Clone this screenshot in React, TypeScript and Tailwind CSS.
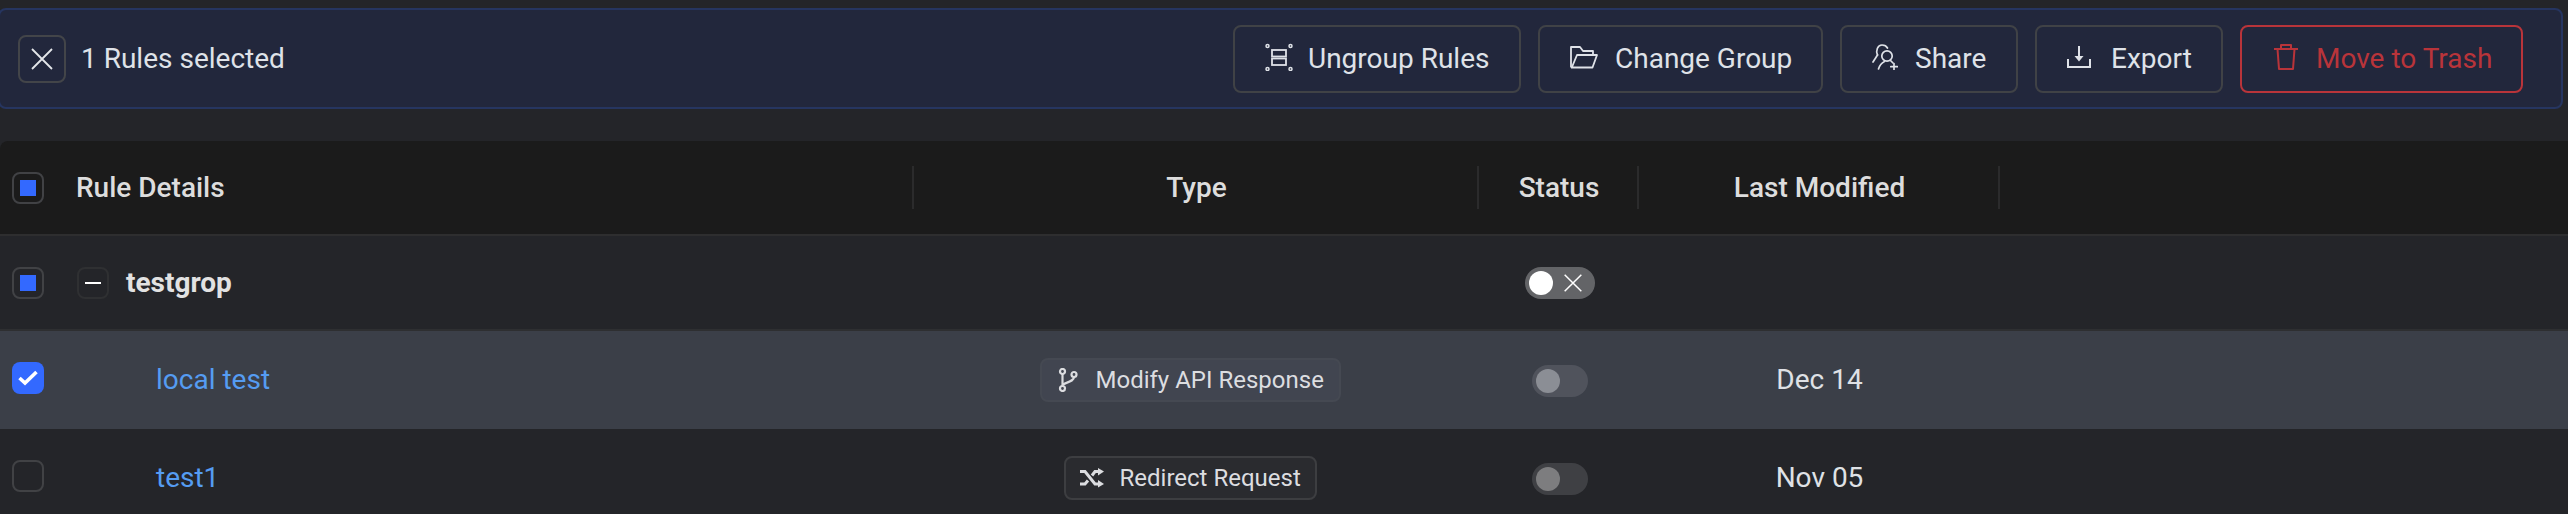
import React, { ReactNode } from "react";

const font = { fontFamily: "Roboto, sans-serif" };

const XIcon = ({ className }: { className?: string }) => (
  <svg viewBox="0 0 24 24" className={className} fill="none" stroke="currentColor" strokeWidth="1.8">
    <path d="M2 2L22 22M22 2L2 22" />
  </svg>
);

const UngroupIcon = () => (
  <svg viewBox="0 0 28 28" className="w-7 h-7" fill="none" stroke="currentColor" strokeWidth="1.5">
    <circle cx="2.500" cy="3" r="1.500" />
    <circle cx="25.500" cy="3" r="1.500" />
    <circle cx="2.500" cy="26" r="1.500" />
    <circle cx="25.500" cy="26" r="1.500" />
    <rect x="7" y="7" width="14" height="6.500" strokeWidth="1.800" />
    <rect x="7" y="15.500" width="14" height="6.500" strokeWidth="1.800" />
  </svg>
);

const FolderIcon = () => (
  <svg viewBox="0 0 28 28" className="w-7 h-7" fill="none" stroke="currentColor" strokeWidth="1.8" strokeLinejoin="round">
    <path d="M1 24.500V4H10L13 8H23V12" />
    <path d="M1 24.500H22.500L27 12H7L2 24" />
  </svg>
);

const ShareIcon = () => (
  <svg viewBox="0 0 26 26" className="w-[26px] h-[26px]" fill="none" stroke="currentColor" strokeWidth="1.700" strokeLinecap="round">
    <path d="M5.500 11C3.500 7 5.500 1 10 1C12.500 1 14.500 2 15.500 4" />
    <path d="M5.500 11L1 18" />
    <circle cx="15" cy="12" r="5.200" />
    <path d="M6.500 25C7.500 21.500 9.500 19 12.500 17.500" />
    <path d="M18.500 16.500L21 19" />
    <path d="M22 19.500V26M18.800 22.700H25.500" />
  </svg>
);

const ExportIcon = () => (
  <svg viewBox="0 0 24 24" className="w-6 h-6" fill="none" stroke="currentColor" strokeWidth="2">
    <path d="M12 1V13" />
    <path d="M7.500 11H16.500L12 16.500Z" fill="currentColor" stroke="none" />
    <path d="M1 14V22H23V14" />
  </svg>
);

const TrashIcon = () => (
  <svg viewBox="0 0 24 26" className="w-6 h-[26px]" fill="none" stroke="currentColor" strokeWidth="2" strokeLinejoin="round">
    <path d="M0 5H24" />
    <path d="M7 5V1H17V5" />
    <path d="M3.500 5L5 25H19L20.500 5" />
  </svg>
);

const BranchIcon = () => (
  <svg viewBox="0 0 20 24" className="w-5 h-6" fill="none" stroke="currentColor" strokeWidth="2.200">
    <circle cx="4.500" cy="3.500" r="2.500" />
    <circle cx="4.500" cy="20.500" r="2.500" />
    <circle cx="16" cy="6.500" r="2.500" />
    <path d="M4.500 6V18" />
    <path d="M16 9C16 13 10 14 4.500 16.500" />
  </svg>
);

const ShuffleIcon = () => (
  <svg viewBox="0 0 24 20" className="w-6 h-5" fill="none" stroke="currentColor" strokeWidth="3">
    <path d="M0 3.500H5L15 16H19" />
    <path d="M0 16H5L8 12.500M12 7.500L15 3.500H19" />
    <path d="M18 0L24 3.500L18 7.500Z" fill="currentColor" stroke="none" />
    <path d="M18 12L24 16L18 19.500Z" fill="currentColor" stroke="none" />
  </svg>
);

const ActionButton = ({ icon, label, danger, className }: { icon: ReactNode; label: string; danger?: boolean; className?: string }) => (
  <button
    className={
      "h-[68px] flex items-center rounded-lg border-2 text-[28px] " +
      (danger ? "border-[#b9343a] text-[#b9343a] " : "border-[#404246] text-[#dfe2e8] ") +
      className
    }
  >
    <span className="-mt-1">{icon}</span>
    <span>{label}</span>
  </button>
);

const Checkbox = ({ state }: { state: "some" | "on" | "off" }) => {
  if (state === "on") {
    return (
      <div className="w-8 h-8 rounded-lg bg-[#3369ff] flex items-center justify-center">
        <svg viewBox="0 0 20 16" className="w-5 h-4" fill="none" stroke="white" strokeWidth="3.600">
          <path d="M1.500 8L7 13L18.500 2" />
        </svg>
      </div>
    );
  }
  return (
    <div className="w-8 h-8 rounded-lg border-2 border-[#414245] flex items-center justify-center">
      {state === "some" && <div className="w-4 h-4 bg-[#3369ff]" />}
    </div>
  );
};

const Toggle = ({ muted }: { muted: boolean }) => (
  <div className={"w-14 h-8 mt-[2px] rounded-full flex items-center pl-1 " + (muted ? "bg-[#50535c]" : "bg-[#3f4044]")}>
    <div className={"w-6 h-6 rounded-full " + (muted ? "bg-[#8b8e95]" : "bg-[#7d7d7f]")} />
  </div>
);

const Tag = ({ icon, label, className }: { icon: ReactNode; label: string; className: string }) => (
  <div className={"h-11 flex items-center rounded-lg border-2 text-[24px] text-[#dcdde0] " + className}>
    {icon}
    <span>{label}</span>
  </div>
);

const HeaderCell = ({ label, className }: { label: string; className: string }) => (
  <div className={"h-[43px] flex items-center border-r-2 border-[#2b2b2c] " + className}>{label}</div>
);

export default function App() {
  return (
    <div className="w-[2568px] h-[514px] overflow-hidden bg-[#242529] pt-2" style={font}>
      {/* 選択バナー */}
      <div className="h-[101px] w-[2565px] -ml-[2px] rounded-lg border-2 border-[#263560] bg-[#22273c] flex items-center pl-[18px] pr-[38px]">
        <button className="w-12 h-12 rounded-lg border-2 border-[#434549] flex items-center justify-center text-[#e4e6ea]">
          <XIcon className="w-6 h-6" />
        </button>
        <span className="ml-[15px] text-[28px] text-[#dfe2e8]">1 Rules selected</span>
        <div className="ml-auto flex gap-[17px]">
          <ActionButton icon={<UngroupIcon />} label="Ungroup Rules" className="w-[288px] pl-[30px] gap-[15px]" />
          <ActionButton icon={<FolderIcon />} label="Change Group" className="w-[285px] pl-[30px] gap-[17px]" />
          <ActionButton icon={<ShareIcon />} label="Share" className="w-[178px] pl-[30px] gap-[17px]" />
          <ActionButton icon={<ExportIcon />} label="Export" className="w-[188px] pl-[30px] gap-5" />
          <ActionButton icon={<TrashIcon />} label="Move to Trash" danger className="w-[283px] pl-8 gap-[18px]" />
        </div>
      </div>

      {/* ヘッダー */}
      <div className="mt-8 h-[95px] bg-[#1b1b1b] border-b-2 border-[#2e2e2f] flex items-center text-[28px] font-medium text-[#dddddd] rounded-tl-lg">
        <div className="w-[76px] pl-3 shrink-0">
          <Checkbox state="some" />
        </div>
        <HeaderCell label="Rule Details" className="w-[838px] justify-start" />
        <HeaderCell label="Type" className="w-[565px] justify-center pl-[2px]" />
        <HeaderCell label="Status" className="w-[160px] justify-center pl-[2px]" />
        <HeaderCell label="Last Modified" className="w-[361px] justify-center pl-[2px]" />
      </div>

      {/* グループ行 */}
      <div className="flex items-center h-[95px] border-b-2 border-[#2e2f31]">
        <div className="w-[77px] pl-3 shrink-0">
          <Checkbox state="some" />
        </div>
        <div className="w-[837px] flex items-center gap-[17px] text-[28px] font-bold text-[#e2e2e2]">
          <div className="w-8 h-8 rounded-lg border-2 border-[#2f3032] flex items-center justify-center">
            <div className="w-4 h-[2px] bg-white" />
          </div>
          testgrop
        </div>
        <div className="w-[565px]" />
        <div className="w-[160px] flex justify-center pl-[2px]">
          <div className="w-[70px] h-8 rounded-full bg-[#636467] flex items-center pl-1 gap-[10px]">
            <div className="w-6 h-6 rounded-full bg-white" />
            <XIcon className="w-[20px] h-[20px] text-white" />
          </div>
        </div>
      </div>

      {/* ルール行 */}
      <div className="flex items-center h-[98px] bg-[#3b3f48]">
        <div className="w-[156px] pl-3 shrink-0 -mt-[4px]">
          <Checkbox state="on" />
        </div>
        <div className="w-[758px] text-[28px] text-[#559cf2]">local test</div>
        <div className="w-[565px] flex justify-center pr-[13px]">
          <Tag
            icon={<BranchIcon />}
            label="Modify API Response"
            className="w-[301px] pl-4 gap-[18px] bg-[#414550] border-[#454952]"
          />
        </div>
        <div className="w-[160px] flex justify-center pl-[2px]">
          <Toggle muted />
        </div>
        <div className="w-[361px] text-center text-[28px] text-[#dfe1e5]">Dec 14</div>
      </div>

      <div className="flex items-center h-[98px]">
        <div className="w-[156px] pl-3 shrink-0 -mt-[4px]">
          <Checkbox state="off" />
        </div>
        <div className="w-[758px] text-[28px] text-[#559cf2]">test1</div>
        <div className="w-[565px] flex justify-center pr-[13px]">
          <Tag
            icon={<ShuffleIcon />}
            label="Redirect Request"
            className="w-[253px] pl-[14px] gap-4 bg-[#2a2b2f] border-[#3d3e41]"
          />
        </div>
        <div className="w-[160px] flex justify-center pl-[2px]">
          <Toggle muted={false} />
        </div>
        <div className="w-[361px] text-center text-[28px] text-[#dfe1e5]">Nov 05</div>
      </div>
    </div>
  );
}
